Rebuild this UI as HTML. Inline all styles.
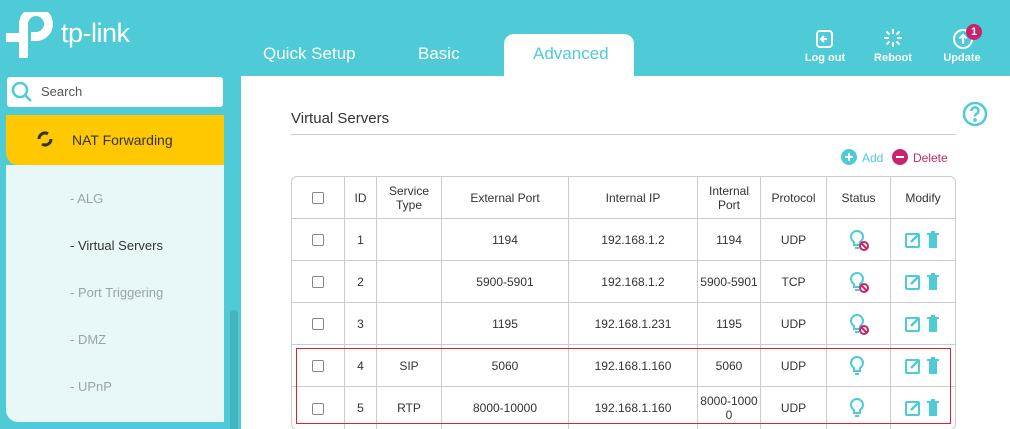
<!DOCTYPE html>
<html><head><meta charset="utf-8"><style>
*{margin:0;padding:0;box-sizing:border-box}
html,body{width:1010px;height:429px;overflow:hidden}
body{background:#4ECBD6;font-family:"Liberation Sans",sans-serif;position:relative}
.a{position:absolute}
.tab{position:absolute;top:44px;color:#fff;font-size:17px}
.hi{position:absolute;color:#fff;font-size:11px;font-weight:bold;text-align:center;width:50px}
.sub{position:absolute;left:70px;font-size:13px;color:#9aa3aa}
table{border-collapse:separate;border-spacing:0;position:absolute;left:291px;top:176px;width:665px;border:1px solid #ccc;border-radius:6px;font-size:12px;color:#333}
td{border-right:1px solid #ccc;border-bottom:1px solid #ccc;text-align:center;height:42px;line-height:14px;padding:0}
td:last-child{border-right:none}
tr:last-child td{border-bottom:none}
.cb{display:inline-block;width:12px;height:12px;border:1px solid #888;border-radius:2px;vertical-align:middle}
svg{vertical-align:middle}
</style></head><body>
<!-- logo -->
<svg class="a" style="left:5px;top:12px" width="52" height="46" viewBox="0 0 52 46"><path d="M14 12a17 17 0 1 1 17 17h-5v-9h5a8 8 0 1 0-8-8v34h-9z" fill="#fff"/><path d="M1 21h22v9H1z" fill="#fff"/></svg>
<div class="a" style="left:61px;top:18px;color:#fff;font-size:27px;letter-spacing:-0.5px">tp-link</div>
<div class="tab" style="left:263px">Quick Setup</div>
<div class="tab" style="left:418px">Basic</div>
<div class="a" style="left:504px;top:34px;width:130px;height:44px;background:#fff;border-radius:10px 10px 0 0"></div>
<div class="tab" style="left:533px;color:#4ECBD6">Advanced</div>
<svg class="a" style="left:815px;top:29px" width="20" height="20" viewBox="0 0 20 20" fill="none" stroke="#fff" stroke-width="2"><rect x="2" y="2" width="15" height="16" rx="3"/><path d="M12 10H6M9 7l-3 3 3 3"/></svg>
<div class="hi" style="left:800px;top:52px">Log out</div>
<svg class="a" style="left:883px;top:28px" width="20" height="20" viewBox="0 0 20 20" stroke="#fff" stroke-width="2"><path d="M10 1v5M10 14v5M1 10h5M14 10h5M3.5 3.5l3 3M13.5 13.5l3 3M3.5 16.5l3-3M13.5 6.5l3-3"/></svg>
<div class="hi" style="left:868px;top:52px">Reboot</div>
<svg class="a" style="left:952px;top:28px" width="22" height="22" viewBox="0 0 22 22" fill="none" stroke="#fff" stroke-width="2"><circle cx="11" cy="11" r="9"/><path d="M11 16V7M7.5 10.5L11 7l3.5 3.5"/></svg>
<div class="a" style="left:966px;top:24px;width:16px;height:16px;border-radius:50%;background:#C8246C;color:#fff;font-size:11px;font-weight:bold;text-align:center;line-height:16px">1</div>
<div class="hi" style="left:937px;top:52px">Update</div>
<div class="a" style="left:7px;top:77px;width:216px;height:30px;background:#fff;border-radius:3px"></div>
<svg class="a" style="left:10px;top:80px" width="24" height="24" viewBox="0 0 24 24" fill="none" stroke="#4ECBD6" stroke-width="2.5"><circle cx="10" cy="10" r="7"/><path d="M15 15l6 6"/></svg>
<div class="a" style="left:41px;top:84px;font-size:13px;color:#555">Search</div>
<div class="a" style="left:6px;top:115px;width:218px;height:50px;background:#FFC800;border-radius:0 0 0 12px"></div>
<svg class="a" style="left:36px;top:130px" width="18" height="18" viewBox="0 0 18 18" fill="none" stroke="#333" stroke-width="3"><path d="M3 9a6 6 0 0 1 9-5.2M15 9a6 6 0 0 1-9 5.2"/></svg>
<div class="a" style="left:72px;top:132px;font-size:14px;color:#333">NAT Forwarding</div>
<div class="a" style="left:6px;top:165px;width:218px;height:257px;background:#E8F8F8;border-radius:0 0 0 12px"></div>
<div class="sub" style="top:191px">- ALG</div>
<div class="sub" style="top:238px;color:#333">- Virtual Servers</div>
<div class="sub" style="top:285px">- Port Triggering</div>
<div class="sub" style="top:332px">- DMZ</div>
<div class="sub" style="top:379px">- UPnP</div>
<div class="a" style="left:230px;top:310px;width:8px;height:130px;background:#44B5BF;border-radius:4px"></div>
<div class="a" style="left:241px;top:76px;width:769px;height:353px;background:#fff"></div>
<div class="a" style="left:291px;top:110px;font-size:15px;color:#333">Virtual Servers</div>
<div class="a" style="left:291px;top:134px;width:665px;height:1px;background:#ccc"></div>
<svg class="a" style="left:962px;top:101px" width="26" height="26" viewBox="0 0 26 26" fill="none" stroke="#4ECBD6" stroke-width="2.5"><circle cx="13" cy="13" r="11"/><path d="M9.5 10a3.5 3.5 0 1 1 5 3c-1.2.6-1.5 1.2-1.5 2.5"/><circle cx="13" cy="19" r="0.6" fill="#4ECBD6"/></svg>
<svg class="a" style="left:841px;top:149px" width="16" height="16" viewBox="0 0 16 16"><circle cx="8" cy="8" r="8" fill="#4ECBD6"/><path d="M8 4v8M4 8h8" stroke="#fff" stroke-width="2"/></svg>
<div class="a" style="left:862px;top:151px;font-size:12px;color:#4ECBD6">Add</div>
<svg class="a" style="left:892px;top:149px" width="16" height="16" viewBox="0 0 16 16"><circle cx="8" cy="8" r="8" fill="#C8246C"/><path d="M4 8h8" stroke="#fff" stroke-width="2"/></svg>
<div class="a" style="left:913px;top:151px;font-size:12px;color:#C8246C">Delete</div>
<svg width="0" height="0" style="position:absolute"><defs>
<g id="bulb"><path d="M6 13c-2-1.5-3-3-3-5a6 6 0 0 1 12 0c0 2-1 3.5-3 5v3H6z" fill="none" stroke="#4ECBD6" stroke-width="2"/><path d="M7 19h4" stroke="#4ECBD6" stroke-width="2"/></g>
<g id="off"><circle cx="16" cy="17" r="4" fill="#fff" stroke="#C8246C" stroke-width="2"/><path d="M13.5 14.5l5 5" stroke="#C8246C" stroke-width="2"/></g>
<g id="mod"><rect x="1" y="3" width="13" height="13" rx="1" fill="none" stroke="#4ECBD6" stroke-width="2"/><path d="M6 11l8-8" stroke="#4ECBD6" stroke-width="2.5"/><path d="M24 4h8v13h-8z" fill="#4ECBD6"/><path d="M22 3h12M26 1h4" stroke="#4ECBD6" stroke-width="2"/></g>
</defs></svg>
<table>
<tr><td style="width:53px"><span class="cb"></span></td><td style="width:32px">ID</td><td style="width:65px">Service<br>Type</td><td style="width:127px">External Port</td><td style="width:129px">Internal IP</td><td style="width:63px">Internal<br>Port</td><td style="width:66px">Protocol</td><td style="width:64px">Status</td><td>Modify</td></tr>
<tr><td><span class="cb"></span></td><td>1</td><td></td><td>1194</td><td>192.168.1.2</td><td>1194</td><td>UDP</td><td><svg width="22" height="22"><use href="#bulb"/><use href="#off"/></svg></td><td><svg width="36" height="18"><use href="#mod"/></svg></td></tr>
<tr><td><span class="cb"></span></td><td>2</td><td></td><td>5900-5901</td><td>192.168.1.2</td><td>5900-5901</td><td>TCP</td><td><svg width="22" height="22"><use href="#bulb"/><use href="#off"/></svg></td><td><svg width="36" height="18"><use href="#mod"/></svg></td></tr>
<tr><td><span class="cb"></span></td><td>3</td><td></td><td>1195</td><td>192.168.1.231</td><td>1195</td><td>UDP</td><td><svg width="22" height="22"><use href="#bulb"/><use href="#off"/></svg></td><td><svg width="36" height="18"><use href="#mod"/></svg></td></tr>
<tr><td><span class="cb"></span></td><td>4</td><td>SIP</td><td>5060</td><td>192.168.1.160</td><td>5060</td><td>UDP</td><td><svg width="22" height="22"><use href="#bulb"/></svg></td><td><svg width="36" height="18"><use href="#mod"/></svg></td></tr>
<tr><td><span class="cb"></span></td><td>5</td><td>RTP</td><td>8000-10000</td><td>192.168.1.160</td><td>8000-1000<br>0</td><td>UDP</td><td><svg width="22" height="22"><use href="#bulb"/></svg></td><td><svg width="36" height="18"><use href="#mod"/></svg></td></tr>
</table>
<div class="a" style="left:296px;top:348px;width:655px;height:76px;border:1px solid #E0202A"></div>
</body></html>
